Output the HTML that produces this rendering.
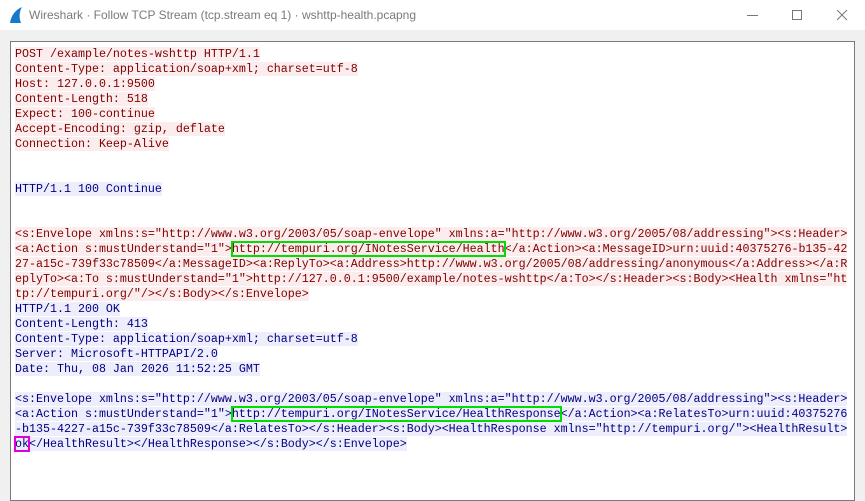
<!DOCTYPE html>
<html><head><meta charset="utf-8"><style>
*{margin:0;padding:0;box-sizing:border-box}
html,body{width:865px;height:487px;overflow:hidden;background:#f0f0f0;font-family:"Liberation Sans",sans-serif}
#title{position:absolute;left:0;top:0;width:865px;height:30px;background:#fff}
#title .t{position:absolute;left:29px;top:8px;font-size:12px;color:#7a7a7a}
#box{position:absolute;left:10px;top:41px;width:845px;height:460px;background:#fff;border:1px solid #7a7a7a;overflow:hidden}
#txt{position:absolute;left:4px;top:5px;font-family:"Liberation Mono",monospace;font-size:11.67px;line-height:15px}
.l{height:15px;white-space:pre}
.c span.b{background:#fbeded;color:#800000}
.s span.b{background:#ededfb;color:#000080}
.g{outline:2px solid #00dd00;outline-offset:-1px}
.m{outline:2px solid #dd00dd;outline-offset:-1px}
</style></head><body>
<div id="title">
<svg style="position:absolute;left:9px;top:7px" width="14" height="16" viewBox="0 0 14 16"><path d="M1 16 C2 9 6 3 13 0 C10 5 10 11 12 16 Z" fill="#1679c9"/></svg>
<div class="t">Wireshark · Follow TCP Stream (tcp.stream eq 1) · wshttp-health.pcapng</div>
<svg style="position:absolute;left:740px;top:8px" width="110" height="14">
<line x1="7" y1="7.5" x2="18" y2="7.5" stroke="#777" stroke-width="1"/>
<rect x="52.5" y="2.5" width="9" height="9" fill="none" stroke="#777"/>
<path d="M97 2 L107 12 M107 2 L97 12" stroke="#777"/>
</svg>
</div>
<div id="box"><div id="txt"><div class="l c"><span class="b">POST /example/notes-wshttp HTTP/1.1</span></div><div class="l c"><span class="b">Content-Type: application/soap+xml; charset=utf-8</span></div><div class="l c"><span class="b">Host: 127.0.0.1:9500</span></div><div class="l c"><span class="b">Content-Length: 518</span></div><div class="l c"><span class="b">Expect: 100-continue</span></div><div class="l c"><span class="b">Accept-Encoding: gzip, deflate</span></div><div class="l c"><span class="b">Connection: Keep-Alive</span></div><div class="l"></div><div class="l"></div><div class="l s"><span class="b">HTTP/1.1 100 Continue</span></div><div class="l"></div><div class="l"></div><div class="l c"><span class="b">&lt;s:Envelope xmlns:s="http://www.w3.org/2003/05/soap-envelope" xmlns:a="http://www.w3.org/2005/08/addressing"&gt;&lt;s:Header&gt;</span></div><div class="l c"><span class="b">&lt;a:Action s:mustUnderstand="1"&gt;<span class="g">http://tempuri.org/INotesService/Health</span>&lt;/a:Action&gt;&lt;a:MessageID&gt;urn:uuid:40375276-b135-42</span></div><div class="l c"><span class="b">27-a15c-739f33c78509&lt;/a:MessageID&gt;&lt;a:ReplyTo&gt;&lt;a:Address&gt;http://www.w3.org/2005/08/addressing/anonymous&lt;/a:Address&gt;&lt;/a:R</span></div><div class="l c"><span class="b">eplyTo&gt;&lt;a:To s:mustUnderstand="1"&gt;http://127.0.0.1:9500/example/notes-wshttp&lt;/a:To&gt;&lt;/s:Header&gt;&lt;s:Body&gt;&lt;Health xmlns="ht</span></div><div class="l c"><span class="b">tp://tempuri.org/"/&gt;&lt;/s:Body&gt;&lt;/s:Envelope&gt;</span></div><div class="l s"><span class="b">HTTP/1.1 200 OK</span></div><div class="l s"><span class="b">Content-Length: 413</span></div><div class="l s"><span class="b">Content-Type: application/soap+xml; charset=utf-8</span></div><div class="l s"><span class="b">Server: Microsoft-HTTPAPI/2.0</span></div><div class="l s"><span class="b">Date: Thu, 08 Jan 2026 11:52:25 GMT</span></div><div class="l"></div><div class="l s"><span class="b">&lt;s:Envelope xmlns:s="http://www.w3.org/2003/05/soap-envelope" xmlns:a="http://www.w3.org/2005/08/addressing"&gt;&lt;s:Header&gt;</span></div><div class="l s"><span class="b">&lt;a:Action s:mustUnderstand="1"&gt;<span class="g">http://tempuri.org/INotesService/HealthResponse</span>&lt;/a:Action&gt;&lt;a:RelatesTo&gt;urn:uuid:40375276</span></div><div class="l s"><span class="b">-b135-4227-a15c-739f33c78509&lt;/a:RelatesTo&gt;&lt;/s:Header&gt;&lt;s:Body&gt;&lt;HealthResponse xmlns="http://tempuri.org/"&gt;&lt;HealthResult&gt;</span></div><div class="l s"><span class="b"><span class="m">ok</span>&lt;/HealthResult&gt;&lt;/HealthResponse&gt;&lt;/s:Body&gt;&lt;/s:Envelope&gt;</span></div></div></div>
</body></html>
